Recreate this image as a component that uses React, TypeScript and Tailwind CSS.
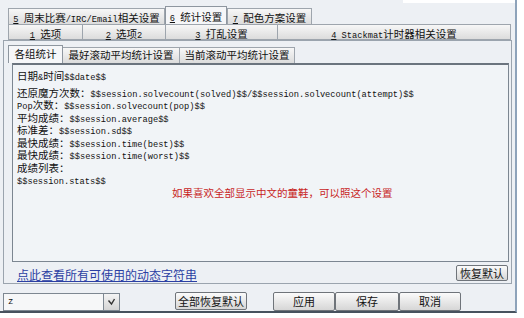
import React from "react";

const CJK_RE = /([\u2E80-\u9FFF\uFF00-\uFFEF\u3000-\u303F]+)/;

function Mixed({ text, cjk, lat }: { text: string; cjk: string; lat: string }) {
  const parts = text.split(CJK_RE);
  return (
    <>
      {parts.map((p, i) =>
        p === "" ? null : CJK_RE.test(p) ? (
          <span key={i} className={cjk}>
            {p}
          </span>
        ) : (
          <span key={i} className={lat}>
            {p}
          </span>
        )
      )}
    </>
  );
}

const CJK_CLS = "font-['Noto_Sans_CJK_SC',sans-serif] text-[10.5px]";
const LAT_CLS = "font-['Liberation_Mono','Noto_Sans_CJK_SC',monospace] text-[8.7px]";

function TabLabel({ n, text }: { n: string; text: string }) {
  return (
    <span className="whitespace-pre text-[#111]">
      <span className={LAT_CLS + " underline"}>{n}</span>
      <span className={LAT_CLS}> </span>
      <Mixed text={text} cjk={CJK_CLS} lat={LAT_CLS} />
    </span>
  );
}

const tabBase =
  "flex items-center justify-center border border-[#9ea5ad] bg-gradient-to-b from-[#f7f7f7] to-[#dcdcdc] leading-none";

function Line({ text, extra }: { text: string; extra?: string }) {
  return (
    <div className={"h-[12.5px] leading-[12.5px] whitespace-pre text-[#111] " + (extra ?? "")}>
      <Mixed text={text} cjk={CJK_CLS} lat={LAT_CLS} />
    </div>
  );
}

const btn =
  "flex items-center justify-center border border-[#6f747a] rounded-[2px] bg-gradient-to-b from-[#fbfbfb] to-[#d6d6d6] font-['Noto_Sans_CJK_SC',sans-serif] text-[11px] leading-none text-[#111]";

export default function App() {
  return (
    <div className="w-[524px] h-[318px] bg-white overflow-hidden">
      <div className="w-[517px] h-[313px] bg-[#edf0f4] border-r-[2px] border-r-[#8ea3ba] border-b-[2px] border-b-[#47525e] flex flex-col">
        {/* top strip */}
        <div className="h-[3px] flex">
          <div className="ml-auto w-[112px] bg-white" />
        </div>
        {/* row 1 tabs */}
        <div className="h-[21px] flex items-end pl-[8px]">
          <div className={tabBase + " w-[157px] h-[16px] border-b-0"}>
            <TabLabel n="5" text="周末比赛/IRC/Email相关设置" />
          </div>
          <div className="flex items-center justify-center border border-[#8e969f] border-b-0 bg-[#f5f6f8] w-[62px] h-[18px] leading-none">
            <TabLabel n="6" text="统计设置" />
          </div>
          <div className={tabBase + " w-[85px] h-[16px] border-b-0"}>
            <TabLabel n="7" text="配色方案设置" />
          </div>
        </div>
        {/* row 2 tabs */}
        <div className="h-[16px] flex pl-[8px] pr-[4px]">
          <div className={tabBase + " w-[75px]"}>
            <TabLabel n="1" text="选项" />
          </div>
          <div className={tabBase + " w-[83px] border-l-0"}>
            <TabLabel n="2" text="选项2" />
          </div>
          <div className={tabBase + " w-[112px] border-l-0"}>
            <TabLabel n="3" text="打乱设置" />
          </div>
          <div className={tabBase + " flex-1 border-l-0"}>
            <TabLabel n="4" text="Stackmat计时器相关设置" />
          </div>
        </div>
        {/* panel */}
        <div className="mx-[3px] h-[244px] border border-[#9ba4ae] flex flex-col">
          {/* sub tabs */}
          <div className="h-[22px] flex items-end pl-[4px]">
            <div className="flex items-center justify-center w-[55px] h-[18px] border border-[#8e969f] border-b-0 bg-[#f6f7f9] leading-none">
              <span className={CJK_CLS + " text-[#111]"}>各组统计</span>
            </div>
            <div className={tabBase + " w-[117px] h-[16px] border-b-0 border-l-0"}>
              <span className={CJK_CLS + " text-[#111]"}>最好滚动平均统计设置</span>
            </div>
            <div className={tabBase + " w-[115px] h-[16px] border-b-0 border-l-0"}>
              <span className={CJK_CLS + " text-[#111]"}>当前滚动平均统计设置</span>
            </div>
          </div>
          {/* textarea */}
          <div className="ml-[8px] mr-[2px] h-[199px] border border-[#7c8691] border-t-[2px] border-t-[#6b747e] bg-[#f1f4f7] pl-[4px] pt-[3px]">
            <Line text="日期&时间$$date$$" />
            <Line text="还原魔方次数：$$session.solvecount(solved)$$/$$session.solvecount(attempt)$$" extra="mt-[4px]" />
            <Line text="Pop次数：$$session.solvecount(pop)$$" />
            <Line text="平均成绩：$$session.average$$" />
            <Line text="标准差：$$session.sd$$" />
            <Line text="最快成绩：$$session.time(best)$$" />
            <Line text="最快成绩：$$session.time(worst)$$" />
            <Line text="成绩列表：" />
            <Line text="$$session.stats$$" />
            <div className="h-[12.5px] leading-[12.5px] pl-[155px] whitespace-pre text-[#c81e1e]">
              <span className={CJK_CLS}>如果喜欢全部显示中文的童鞋，可以照这个设置</span>
            </div>
          </div>
          {/* link row */}
          <div className="flex-1 flex items-center justify-between pl-[13px] pr-[3px]">
            <span className="mt-[5px] font-['Noto_Sans_CJK_SC',sans-serif] text-[12px] leading-none text-[#2b3fa3] underline">
              点此查看所有可使用的动态字符串
            </span>
            <div className={btn + " w-[52px] h-[16px] mt-[1px]"}>恢复默认</div>
          </div>
        </div>
        {/* bottom row */}
        <div className="flex-1 flex items-end pl-[3px]">
          <div className="flex h-[18px] mb-[0px]">
            <div className="w-[100px] h-full bg-[#f6f7f8] border border-[#7d8791] border-r-0 flex items-center pl-[4px]">
              <span className="font-['Liberation_Mono',monospace] text-[9px] text-[#111] leading-none">z</span>
            </div>
            <div className="w-[17px] h-full border border-[#7d8791] bg-gradient-to-b from-[#f4f4f4] to-[#d4d4d4] flex items-center justify-center">
              <svg width="9" height="8" viewBox="0 0 9 8">
                <path d="M1.5 2.5 L4.5 6 L7.5 1" fill="none" stroke="#333" strokeWidth="1.4" />
              </svg>
            </div>
          </div>
          <div className={btn + " ml-[55px] w-[72px] h-[18px] mb-[1px]"}>全部恢复默认</div>
          <div className={btn + " ml-[26px] w-[62px] h-[19px]"}>应用</div>
          <div className={btn + " w-[64px] h-[19px]"}>保存</div>
          <div className={btn + " w-[62px] h-[19px]"}>取消</div>
        </div>
      </div>
    </div>
  );
}
